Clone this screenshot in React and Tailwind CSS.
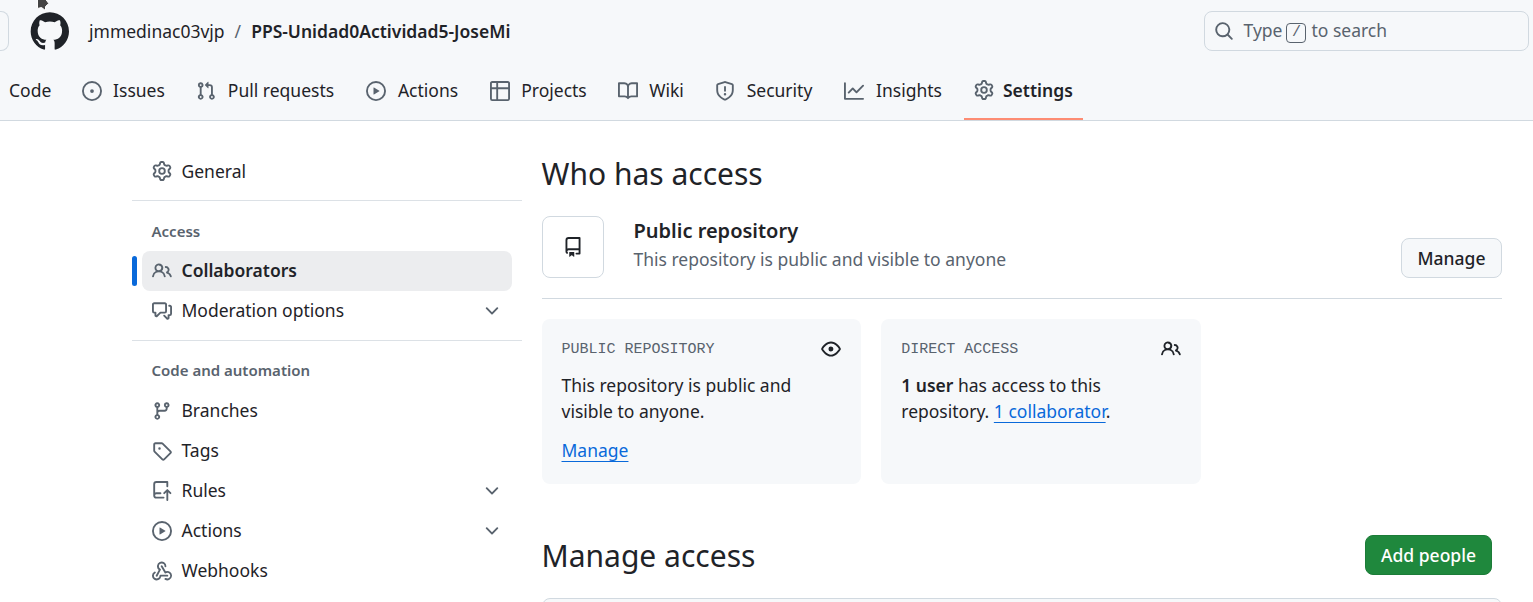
import React from "react";

const PATHS = {
  gear: "M8 0a8.2 8.2 0 0 1 .701.031C9.444.095 9.99.645 10.16 1.29l.288 1.107c.018.066.079.158.212.224.231.114.454.243.668.386.123.082.233.09.299.071l1.103-.303c.644-.176 1.392.021 1.82.63.27.385.506.792.704 1.218.315.675.111 1.422-.364 1.891l-.814.806c-.049.048-.098.147-.088.294.016.257.016.515 0 .772-.01.147.038.246.088.294l.814.806c.475.469.679 1.216.364 1.891a7.977 7.977 0 0 1-.704 1.217c-.428.61-1.176.807-1.82.63l-1.102-.302c-.067-.019-.177-.011-.3.071a5.909 5.909 0 0 1-.668.386c-.133.066-.194.158-.211.224l-.29 1.106c-.168.646-.715 1.196-1.458 1.26a8.006 8.006 0 0 1-1.402 0c-.743-.064-1.289-.614-1.458-1.26l-.289-1.106c-.018-.066-.079-.158-.212-.224a5.738 5.738 0 0 1-.668-.386c-.123-.082-.233-.09-.299-.071l-1.103.303c-.644.176-1.392-.021-1.82-.63a8.12 8.12 0 0 1-.704-1.218c-.315-.675-.111-1.422.363-1.891l.815-.806c.05-.048.098-.147.088-.294a6.214 6.214 0 0 1 0-.772c.01-.147-.038-.246-.088-.294l-.815-.806C.635 6.045.431 5.298.746 4.623a7.92 7.92 0 0 1 .704-1.217c.428-.61 1.176-.807 1.82-.63l1.102.302c.067.019.177.011.3-.071.214-.143.437-.272.668-.386.133-.066.194-.158.211-.224l.29-1.106C6.009.645 6.556.095 7.299.03 7.53.01 7.764 0 8 0Zm-.571 1.525c-.036.003-.108.036-.137.146l-.289 1.105c-.147.561-.549.967-.998 1.189-.173.086-.34.183-.5.29-.417.278-.97.423-1.529.27l-1.103-.303c-.109-.03-.175.016-.195.045-.22.312-.412.644-.573.99-.014.031-.021.11.059.19l.815.806c.411.406.562.957.53 1.456a4.709 4.709 0 0 0 0 .582c.032.499-.119 1.05-.53 1.456l-.815.806c-.081.08-.073.159-.059.19.162.346.353.677.573.989.02.03.085.076.195.046l1.102-.303c.56-.153 1.113-.008 1.53.27.161.107.328.204.501.29.447.222.85.629.997 1.189l.289 1.105c.029.109.101.143.137.146a6.6 6.6 0 0 0 1.142 0c.036-.003.108-.036.137-.146l.289-1.105c.147-.561.549-.967.998-1.189.173-.086.34-.183.5-.29.417-.278.97-.423 1.529-.27l1.103.303c.109.029.175-.016.195-.045.22-.313.411-.644.573-.99.014-.031.021-.11-.059-.19l-.815-.806c-.411-.406-.562-.957-.53-1.456a4.709 4.709 0 0 0 0-.582c-.032-.499.119-1.05.53-1.456l.815-.806c.081-.08.073-.159.059-.19a6.464 6.464 0 0 0-.573-.989c-.02-.03-.085-.076-.195-.046l-1.102.303c-.56.153-1.113.008-1.53-.27a4.44 4.44 0 0 0-.501-.29c-.447-.222-.85-.629-.997-1.189l-.289-1.105c-.029-.11-.101-.143-.137-.146a6.6 6.6 0 0 0-1.142 0ZM11 8a3 3 0 1 1-6 0 3 3 0 0 1 6 0ZM9.5 8a1.5 1.5 0 1 0-3.001.001A1.5 1.5 0 0 0 9.5 8Z",
  github: "M12.5.75C6.146.75 1 5.896 1 12.25c0 5.089 3.292 9.387 7.863 10.91.575.101.79-.244.79-.546 0-.273-.014-1.178-.014-2.142-2.889.532-3.636-.704-3.866-1.35-.13-.331-.69-1.352-1.18-1.625-.402-.216-.977-.748-.014-.762.906-.014 1.553.834 1.769 1.179 1.035 1.74 2.688 1.25 3.349.948.1-.747.402-1.25.733-1.538-2.559-.287-5.232-1.279-5.232-5.678 0-1.25.445-2.285 1.178-3.09-.115-.288-.517-1.467.115-3.048 0 0 .963-.302 3.163 1.179.92-.259 1.897-.388 2.875-.388.977 0 1.955.13 2.875.388 2.2-1.495 3.162-1.179 3.162-1.179.633 1.581.23 2.76.115 3.048.733.805 1.179 1.825 1.179 3.09 0 4.413-2.688 5.39-5.247 5.678.417.36.776 1.05.776 2.128 0 1.538-.014 2.774-.014 3.162 0 .302.216.662.79.547C20.709 21.637 24 17.324 24 12.25 24 5.896 18.854.75 12.5.75Z",
  issue: "M8 9.5a1.5 1.5 0 1 0 0-3 1.5 1.5 0 0 0 0 3ZM8 0a8 8 0 1 1 0 16A8 8 0 0 1 8 0ZM1.5 8a6.5 6.5 0 1 0 13 0 6.5 6.5 0 0 0-13 0Z",
  pull: "M1.5 3.25a2.25 2.25 0 1 1 3 2.122v5.256a2.251 2.251 0 1 1-1.5 0V5.372A2.25 2.25 0 0 1 1.5 3.25Zm5.677-.177L9.573.677A.25.25 0 0 1 10 .854V2.5h1A2.5 2.5 0 0 1 13.5 5v5.628a2.251 2.251 0 1 1-1.5 0V5a1 1 0 0 0-1-1h-1v1.646a.25.25 0 0 1-.427.177L7.177 3.427a.25.25 0 0 1 0-.354ZM3.75 2.5a.75.75 0 1 0 0 1.5.75.75 0 0 0 0-1.5Zm0 9.5a.75.75 0 1 0 0 1.5.75.75 0 0 0 0-1.5Zm8.25.75a.75.75 0 1 0 1.5 0 .75.75 0 0 0-1.5 0Z",
  play: "M8 0a8 8 0 1 1 0 16A8 8 0 0 1 8 0ZM1.5 8a6.5 6.5 0 1 0 13 0 6.5 6.5 0 0 0-13 0Zm4.879-2.773 4.264 2.559a.25.25 0 0 1 0 .428l-4.264 2.559A.25.25 0 0 1 6 10.559V5.442a.25.25 0 0 1 .379-.215Z",
  table: "M0 1.75C0 .784.784 0 1.75 0h12.5C15.216 0 16 .784 16 1.75v12.5A1.75 1.75 0 0 1 14.25 16H1.75A1.75 1.75 0 0 1 0 14.25ZM6.5 6.5v8h7.75a.25.25 0 0 0 .25-.25V6.5Zm8-1.5V1.75a.25.25 0 0 0-.25-.25H6.5V5Zm-13 1.5v7.75c0 .138.112.25.25.25H5v-8ZM5 5V1.5H1.75a.25.25 0 0 0-.25.25V5Z",
  book: "M0 1.75A.75.75 0 0 1 .75 1h4.253c1.227 0 2.317.59 3 1.501A3.743 3.743 0 0 1 11.006 1h4.245a.75.75 0 0 1 .75.75v10.5a.75.75 0 0 1-.75.75h-4.507a2.25 2.25 0 0 0-1.591.659l-.622.621a.75.75 0 0 1-1.06 0l-.622-.621A2.25 2.25 0 0 0 5.258 13H.75a.75.75 0 0 1-.75-.75Zm7.251 10.324.004-5.073-.002-2.253A2.25 2.25 0 0 0 5.003 2.5H1.5v9h3.757a3.75 3.75 0 0 1 1.994.574ZM8.755 4.75l-.004 7.322a3.752 3.752 0 0 1 1.992-.572H14.5v-9h-3.495a2.25 2.25 0 0 0-2.25 2.25Z",
  shield: "M7.467.133a1.748 1.748 0 0 1 1.066 0l5.25 1.68A1.75 1.75 0 0 1 15 3.48V7c0 1.566-.32 3.182-1.303 4.682-.983 1.498-2.585 2.813-5.032 3.855a1.697 1.697 0 0 1-1.33 0c-2.447-1.042-4.049-2.357-5.032-3.855C1.32 10.182 1 8.566 1 7V3.48a1.75 1.75 0 0 1 1.217-1.667Zm.61 1.429a.25.25 0 0 0-.153 0l-5.25 1.68a.25.25 0 0 0-.174.238V7c0 1.358.275 2.666 1.057 3.86.784 1.194 2.121 2.34 4.366 3.297a.196.196 0 0 0 .154 0c2.245-.956 3.582-2.104 4.366-3.298C13.225 9.666 13.5 8.36 13.5 7V3.48a.251.251 0 0 0-.174-.237l-5.25-1.68ZM8.75 4.75v3a.75.75 0 0 1-1.5 0v-3a.75.75 0 0 1 1.5 0ZM9 10.5a1 1 0 1 1-2 0 1 1 0 0 1 2 0Z",
  graph: "M1.5 1.75V13.5h13.75a.75.75 0 0 1 0 1.5H.75a.75.75 0 0 1-.75-.75V1.75a.75.75 0 0 1 1.5 0Zm14.28 2.53-5.25 5.25a.75.75 0 0 1-1.06 0L7 7.06 4.28 9.78a.751.751 0 0 1-1.042-.018.751.751 0 0 1-.018-1.042l3.25-3.25a.75.75 0 0 1 1.06 0L10 7.94l4.72-4.72a.751.751 0 0 1 1.042.018.751.751 0 0 1 .018 1.042Z",
  search: "M10.68 11.74a6 6 0 0 1-7.922-8.982 6 6 0 0 1 8.982 7.922l3.04 3.04a.749.749 0 0 1-.326 1.275.749.749 0 0 1-.734-.215ZM11.5 7a4.499 4.499 0 1 0-8.997 0A4.499 4.499 0 0 0 11.5 7Z",
  people: "M2 5.5a3.5 3.5 0 1 1 5.898 2.549 5.508 5.508 0 0 1 3.034 4.084.75.75 0 1 1-1.482.235 4 4 0 0 0-7.9 0 .75.75 0 0 1-1.482-.236A5.507 5.507 0 0 1 3.102 8.05 3.493 3.493 0 0 1 2 5.5ZM11 4a3.001 3.001 0 0 1 2.22 5.018 5.01 5.01 0 0 1 2.56 3.012.749.749 0 0 1-.885.954.752.752 0 0 1-.549-.514 3.507 3.507 0 0 0-2.522-2.372.75.75 0 0 1-.574-.73v-.352a.75.75 0 0 1 .416-.672A1.5 1.5 0 0 0 11 5.5.75.75 0 0 1 11 4Zm-5.5-.5a2 2 0 1 0-.001 3.999A2 2 0 0 0 5.5 3.5Z",
  comments: "M1.75 1h8.5c.966 0 1.75.784 1.75 1.75v5.5A1.75 1.75 0 0 1 10.25 10H7.061l-2.574 2.573A1.458 1.458 0 0 1 2 11.543V10h-.25A1.75 1.75 0 0 1 0 8.25v-5.5C0 1.784.784 1 1.75 1ZM1.5 2.75v5.5c0 .138.112.25.25.25h1a.75.75 0 0 1 .75.75v2.19l2.72-2.72a.749.749 0 0 1 .53-.22h3.5a.25.25 0 0 0 .25-.25v-5.5a.25.25 0 0 0-.25-.25h-8.5a.25.25 0 0 0-.25.25Zm13 2a.25.25 0 0 0-.25-.25h-.5a.75.75 0 0 1 0-1.5h.5c.966 0 1.75.784 1.75 1.75v5.5A1.75 1.75 0 0 1 14.25 12H14v1.543a1.458 1.458 0 0 1-2.487 1.03L9.22 12.28a.749.749 0 0 1 .326-1.275.749.749 0 0 1 .734.215l2.22 2.22v-2.19a.75.75 0 0 1 .75-.75h1a.25.25 0 0 0 .25-.25Z",
  chevron: "M12.78 5.22a.749.749 0 0 1 0 1.06l-4.25 4.25a.749.749 0 0 1-1.06 0L3.22 6.28a.749.749 0 1 1 1.06-1.06L8 8.939l3.72-3.719a.749.749 0 0 1 1.06 0Z",
  branch: "M9.5 3.25a2.25 2.25 0 1 1 3 2.122V6A2.5 2.5 0 0 1 10 8.5H6a1 1 0 0 0-1 1v1.128a2.251 2.251 0 1 1-1.5 0V5.372a2.25 2.25 0 1 1 1.5 0v1.836A2.493 2.493 0 0 1 6 7h4a1 1 0 0 0 1-1v-.628A2.25 2.25 0 0 1 9.5 3.25Zm-6 0a.75.75 0 1 0 1.5 0 .75.75 0 0 0-1.5 0Zm8.25-.75a.75.75 0 1 0 0 1.5.75.75 0 0 0 0-1.5ZM4.25 12a.75.75 0 1 0 0 1.5.75.75 0 0 0 0-1.5Z",
  tag: "M1 7.775V2.75C1 1.784 1.784 1 2.75 1h5.025c.464 0 .91.184 1.238.513l6.25 6.25a1.75 1.75 0 0 1 0 2.474l-5.026 5.026a1.75 1.75 0 0 1-2.474 0l-6.25-6.25A1.752 1.752 0 0 1 1 7.775Zm1.5 0c0 .066.026.13.073.177l6.25 6.25a.25.25 0 0 0 .354 0l5.025-5.025a.25.25 0 0 0 0-.354l-6.25-6.25a.25.25 0 0 0-.177-.073H2.75a.25.25 0 0 0-.25.25ZM6 5a1 1 0 1 1 0 2 1 1 0 0 1 0-2Z",
  rules: "M1 2.5A2.5 2.5 0 0 1 3.5 0h8.75a.75.75 0 0 1 .75.75v3.5a.75.75 0 0 1-1.5 0V1.5h-8a1 1 0 0 0-1 1v6.708A2.493 2.493 0 0 1 3.5 9h3.25a.75.75 0 0 1 0 1.5H3.5a1 1 0 0 0 0 2h5.75a.75.75 0 0 1 0 1.5H3.5A2.5 2.5 0 0 1 1 11.5Zm13.23 7.79-.001-.001-1.224-1.224v6.184a.75.75 0 0 1-1.5 0V9.066L10.28 10.29a.75.75 0 0 1-1.06-1.061l2.505-2.504a.75.75 0 0 1 1.06 0L15.29 9.23a.751.751 0 0 1-.018 1.042.751.751 0 0 1-1.042.018Z",
  webhook: "M5.5 4.25a2.25 2.25 0 0 1 4.5 0 .75.75 0 0 0 1.5 0 3.75 3.75 0 1 0-6.14 2.889l-2.272 4.258a.75.75 0 0 0 1.324.706L7 7.25a.75.75 0 0 0-.309-1.015A2.25 2.25 0 0 1 5.5 4.25Z M7.364 3.607a.75.75 0 0 1 1.03.257l2.608 4.349a3.75 3.75 0 1 1-.628 6.785.75.75 0 0 1 .752-1.299 2.25 2.25 0 1 0-.033-3.88.75.75 0 0 1-1.03-.256L7.107 4.636a.75.75 0 0 1 .257-1.03Z M2.9 8.776A.75.75 0 0 1 2.625 9.8 2.25 2.25 0 1 0 6 11.75a.75.75 0 0 1 .75-.751h5.5a.75.75 0 0 1 0 1.5H7.425a3.751 3.751 0 1 1-5.55-3.998.75.75 0 0 1 1.024.274Z",
  repo: "M2 2.5A2.5 2.5 0 0 1 4.5 0h8.75a.75.75 0 0 1 .75.75v12.5a.75.75 0 0 1-.75.75h-2.5a.75.75 0 0 1 0-1.5h1.75v-2h-8a1 1 0 0 0-.714 1.7.75.75 0 1 1-1.072 1.05A2.495 2.495 0 0 1 2 11.5Zm10.5-1h-8a1 1 0 0 0-1 1v6.708A2.486 2.486 0 0 1 4.5 9h8ZM5 12.25a.25.25 0 0 1 .25-.25h3.5a.25.25 0 0 1 .25.25v3.25a.25.25 0 0 1-.4.2l-1.45-1.087a.249.249 0 0 0-.3 0L5.4 15.7a.25.25 0 0 1-.4-.2Z",
  eye: "M8 2c1.981 0 3.671.992 4.933 2.078 1.27 1.091 2.187 2.345 2.637 3.023a1.62 1.62 0 0 1 0 1.798c-.45.678-1.367 1.932-2.637 3.023C11.67 13.008 9.981 14 8 14c-1.981 0-3.671-.992-4.933-2.078C1.797 10.83.88 9.576.43 8.898a1.62 1.62 0 0 1 0-1.798c.45-.677 1.367-1.931 2.637-3.022C4.33 2.992 6.019 2 8 2ZM1.679 7.932a.12.12 0 0 0 0 .136c.411.622 1.241 1.75 2.366 2.717C5.176 11.758 6.527 12.5 8 12.5c1.473 0 2.825-.742 3.955-1.715 1.124-.967 1.954-2.096 2.366-2.717a.12.12 0 0 0 0-.136c-.412-.621-1.242-1.75-2.366-2.717C10.824 4.242 9.473 3.5 8 3.5c-1.473 0-2.825.742-3.955 1.715-1.124.967-1.954 2.096-2.366 2.717ZM8 10a2 2 0 1 1-.001-3.999A2 2 0 0 1 8 10Z",
};

function Icon({ name, box = 16, className = "size-5 text-[#59636e]" }) {
  return (
    <svg viewBox={`0 0 ${box} ${box}`} fill="currentColor" aria-hidden="true" className={`shrink-0 ${className}`}>
      <path d={PATHS[name]} />
    </svg>
  );
}

const TABS = [
  ["issue", "Issues", "w-[54px]"],
  ["pull", "Pull requests", "w-[110px]"],
  ["play", "Actions", "w-[64px]"],
  ["table", "Projects", "w-[68px]"],
  ["book", "Wiki", "w-[37px]"],
  ["shield", "Security", "w-[69px]"],
  ["graph", "Insights", "w-[70px]"],
];

function Header() {
  return (
    <header className="h-[121px] overflow-hidden border-b border-[#d1d9e0] bg-[#f6f8fa]">
      <div className="relative flex h-[62px] items-center pr-1">
        <div className="h-10 w-[9px] rounded-r-lg border border-l-0 border-[#d1d9e0]" />
        <Icon name="github" box={24} className="ml-5 size-10 text-[#1f2328]" />
        <svg viewBox="0 0 14 12" className="absolute top-0 left-[36px] h-3 w-[14px]">
          <path d="M1.5 -1V8.5L5.5 7.5L9.5 10.5L9.5 6.5L12.8 3.5L9.5 -1Z" fill="#444" stroke="#fff" />
        </svg>
        <div className="ml-5 flex items-center whitespace-nowrap">
          <span>jmmedinac03vjp</span>
          <span className="px-[10px] text-[#59636e]">/</span>
          <span className="font-semibold">PPS-Unidad0Actividad5-JoseMi</span>
        </div>
        <div className="ml-auto flex h-10 w-[325px] items-center rounded-lg border border-[#d1d9e0] pl-[9px] text-[#59636e]">
          <Icon name="search" />
          <span className="ml-[9.5px] pb-[2px]">Type</span>
          <span className="mr-[5px] ml-1 mt-1 flex h-5 w-5 items-center justify-center rounded border border-[#59636e] font-['Liberation_Mono',monospace] text-[15px]">/</span>
          <span className="pb-[2px]">to search</span>
        </div>
      </div>
      <nav className="flex h-[59px] gap-[10px] whitespace-nowrap">
        <div className="flex h-[57px] w-[62px] items-center pb-[2px] pl-[9px]">Code</div>
        {TABS.map(([icon, label, width]) => (
          <div key={label} className="flex h-[57px] items-center gap-[10px] px-[10px]">
            <Icon name={icon} />
            <span className={`pb-[2px] text-center ${width}`}>{label}</span>
          </div>
        ))}
        <div className="flex h-[58px] w-[119px] items-center gap-[9px] border-b-2 border-[#fd8c73] pl-[10px] font-semibold">
          <Icon name="gear" />
          <span>Settings</span>
        </div>
      </nav>
    </header>
  );
}

function NavItem({ icon, label, active, expandable, labelClass = "pb-[2px]" }) {
  return (
    <div className="flex h-10 items-center">
      <div className={active ? "mr-[5px] h-[30px] w-[5px] rounded-full bg-[#0969da]" : "mr-[5px] w-[5px]"} />
      <div className={`mr-[10px] flex h-10 flex-1 items-center rounded-lg px-[10px] ${active ? "bg-[#ecedef] font-semibold" : ""}`}>
        <Icon name={icon} />
        <span className={`ml-[9.5px] flex-1 ${labelClass}`}>{label}</span>
        {expandable && <Icon name="chevron" />}
      </div>
    </div>
  );
}

function Sidebar() {
  return (
    <aside className="w-[390px] shrink-0 pt-[30px]">
      <NavItem icon="gear" label="General" labelClass="pb-px" />
      <hr className="mt-[9px] border-[#dce1e6]" />
      <h3 className="mt-5 mb-[9px] ml-[19.5px] text-[15px] leading-[21px] font-semibold text-[#59636e]">Access</h3>
      <NavItem icon="people" label="Collaborators" active />
      <NavItem icon="comments" label="Moderation options" expandable />
      <hr className="mt-[9px] border-[#dce1e6]" />
      <h3 className="mt-[19px] mb-[10px] ml-[19.5px] text-[15px] leading-[21px] font-semibold text-[#59636e]">Code and automation</h3>
      <NavItem icon="branch" label="Branches" />
      <NavItem icon="tag" label="Tags" />
      <NavItem icon="rules" label="Rules" expandable />
      <NavItem icon="play" label="Actions" expandable />
      <NavItem icon="webhook" label="Webhooks" />
    </aside>
  );
}

function Card({ title, icon, children }) {
  return (
    <section className="h-[165px] flex-1 rounded-lg bg-[#f6f8fa] px-5 pt-[19px]">
      <div className="flex h-[22px] items-center justify-between">
        <h4 className="pt-[2px] font-['Liberation_Mono',monospace] text-[15px] text-[#59636e]">{title}</h4>
        <Icon name={icon} className="size-5 text-[#1f2328]" />
      </div>
      {children}
    </section>
  );
}

const LINK = "text-[#0969da] underline decoration-1 underline-offset-[3.5px]";

export default function App() {
  return (
    <div className="h-[602px] w-[1533px] overflow-hidden bg-white font-['Noto_Sans',sans-serif] text-[17.5px] leading-[26px] text-[#1f2328]">
      <Header />
      <div className="flex gap-[19.5px] pl-[132px]">
        <Sidebar />
        <main className="w-[960.5px] pt-[30px]">
          <h2 className="text-[30px] leading-[45px]">Who has access</h2>
          <div className="mt-5 flex h-[62px]">
            <div className="flex size-[62px] items-center justify-center rounded-lg border border-[#d1d9e0]">
              <Icon name="repo" className="size-5 text-[#1f2328]" />
            </div>
            <div className="ml-[30px] flex-1">
              <h3 className="text-[20px] leading-[30px] font-semibold">Public repository</h3>
              <p className="text-[#59636e]">This repository is public and visible to anyone</p>
            </div>
            <button className="mt-[22px] h-10 w-[101px] rounded-lg border border-[#d1d9e0] bg-[#f6f8fa] font-medium">Manage</button>
          </div>
          <hr className="mt-5 border-[#d1d9e0]" />
          <div className="mt-5 flex w-[659.5px] gap-5">
            <Card title="PUBLIC REPOSITORY" icon="eye">
              <p className="mt-3">
                This repository is public and
                <br />
                visible to anyone.
              </p>
              <p className="mt-[13px]">
                <a className={LINK}>Manage</a>
              </p>
            </Card>
            <Card title="DIRECT ACCESS" icon="people">
              <p className="mt-3">
                <strong className="font-semibold">1 user</strong> has access to this
                <br />
                repository. <a className={LINK}>1 collaborator</a>.
              </p>
            </Card>
          </div>
          <div className="mt-[49px] flex items-start justify-between pr-[10px]">
            <h2 className="text-[30px] leading-[45px]">Manage access</h2>
            <button className="mt-[2px] h-10 w-[127px] rounded-lg border border-[#1c7c38] bg-[#1f883d] font-medium text-white">Add people</button>
          </div>
          <div className="mt-5 h-20 rounded-lg border border-[#d1d9e0] bg-[#f6f8fa]" />
        </main>
      </div>
    </div>
  );
}
